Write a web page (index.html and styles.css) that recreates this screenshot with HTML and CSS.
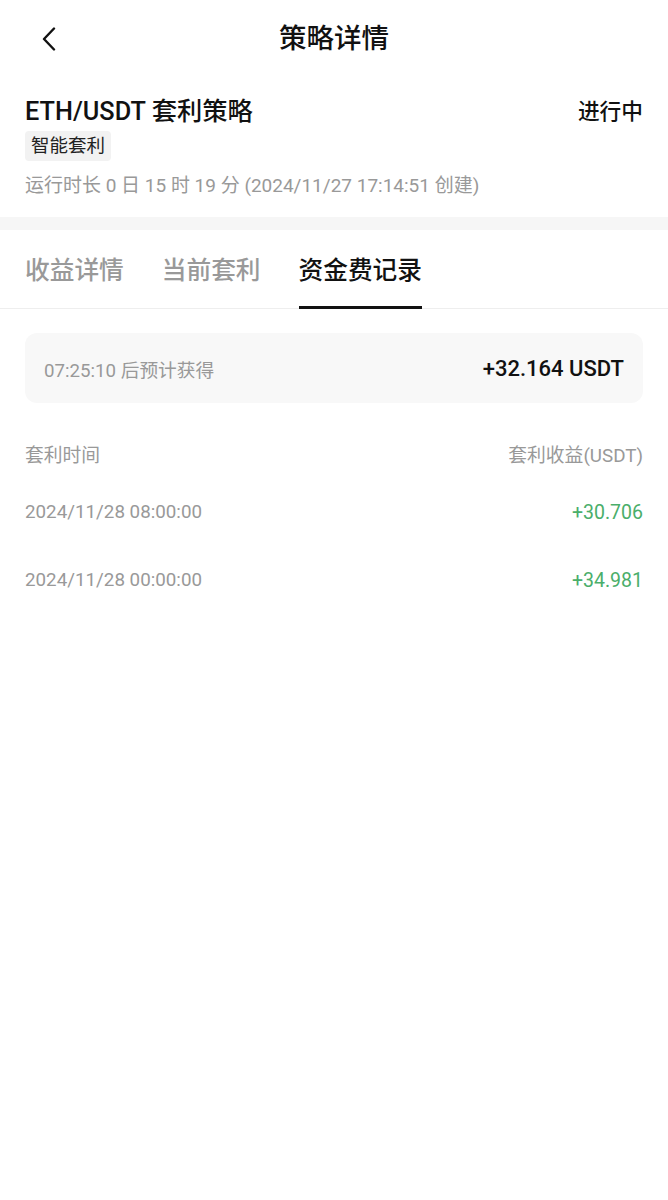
FILE: index.html
```html
<!DOCTYPE html>
<html lang="zh">
<head>
<meta charset="utf-8">
<link rel="stylesheet" href="styles.css">
</head>
<body>
<div class="page">
  <header class="nav">
    <svg class="back" width="16" height="24" viewBox="0 0 16 24"><path d="M13 1.5 L3 12 L13 22.5" fill="none" stroke="#111" stroke-width="2.4" stroke-linecap="round" stroke-linejoin="round"/></svg>
    <h1 class="nav-title">策略详情</h1>
  </header>
  <section class="summary">
    <div class="summary-top">
      <div class="name">ETH/USDT 套利策略</div>
      <div class="status">进行中</div>
    </div>
    <span class="tag">智能套利</span>
    <div class="meta">运行时长 0 日 15 时 19 分 (2024/11/27 17:14:51 创建)</div>
  </section>
  <div class="band"></div>
  <nav class="tabs">
    <div class="tab">收益详情</div>
    <div class="tab">当前套利</div>
    <div class="tab active">资金费记录</div>
  </nav>
  <section class="content">
    <div class="card">
      <span class="card-label">07:25:10 后预计获得</span>
      <span class="card-value">+32.164 USDT</span>
    </div>
    <div class="row head">
      <span>套利时间</span>
      <span>套利收益(USDT)</span>
    </div>
    <div class="row">
      <span>2024/11/28 08:00:00</span>
      <span class="gain">+30.706</span>
    </div>
    <div class="row">
      <span>2024/11/28 00:00:00</span>
      <span class="gain">+34.981</span>
    </div>
  </section>
</div>
</body>
</html>
```
FILE: styles.css
```css
* { box-sizing: border-box; }
html, body { margin: 0; padding: 0; background: #fff; }
body {
  font-family: Roboto, "Noto Sans CJK SC", sans-serif;
  color: #111;
}
.page { width: 668px; }
.nav {
  position: relative;
  height: 78px;
  display: flex;
  align-items: center;
  justify-content: center;
}
.back { position: absolute; left: 41px; top: 27px; }
.nav-title {
  margin: 0;
  font-size: 27.5px;
  font-weight: 500;
  line-height: 1;
}
.summary { padding: 17px 25px 18px; }
.summary-top {
  display: flex;
  justify-content: space-between;
  align-items: center;
}
.name { font-size: 25.3px; font-weight: 500; line-height: 34px; }
.status { font-size: 21.7px; font-weight: 500; line-height: 34px; }
.tag {
  display: inline-block;
  margin-top: 2px;
  padding: 0 6px;
  background: #f2f2f2;
  border-radius: 4px;
  font-size: 18.5px;
  line-height: 30px;
  color: #222;
}
.meta {
  margin-top: 12px;
  font-size: 19px;
  line-height: 26px;
  color: #999;
}
.band { height: 13px; background: #f6f6f6; }
.tabs {
  display: flex;
  gap: 38px;
  padding: 0 25px;
  border-bottom: 1px solid #eeeeee;
  height: 79px;
}
.tab {
  font-size: 24.7px;
  font-weight: 500;
  color: #999;
  display: flex;
  align-items: center;
  position: relative;
  padding-bottom: 2px;
}
.tab.active { color: #111; }
.tab.active::after {
  content: "";
  position: absolute;
  left: 0; right: 0; bottom: -1px;
  height: 3px;
  background: #111;
}
.content { padding: 24px 25px 0; }
.card {
  display: flex;
  justify-content: space-between;
  align-items: center;
  height: 70px;
  padding: 0 19px;
  background: #f8f8f8;
  border-radius: 12px;
}
.card-label { font-size: 18.7px; color: #999; }
.card-value { font-size: 22px; font-weight: 500; color: #111; }
.row {
  display: flex;
  justify-content: space-between;
  align-items: center;
  height: 68px;
  font-size: 18.8px;
  color: #999;
}
.row.head { height: 50px; margin-top: 25px; }
.gain { color: #4aae6a; font-size: 19.5px; }
```
